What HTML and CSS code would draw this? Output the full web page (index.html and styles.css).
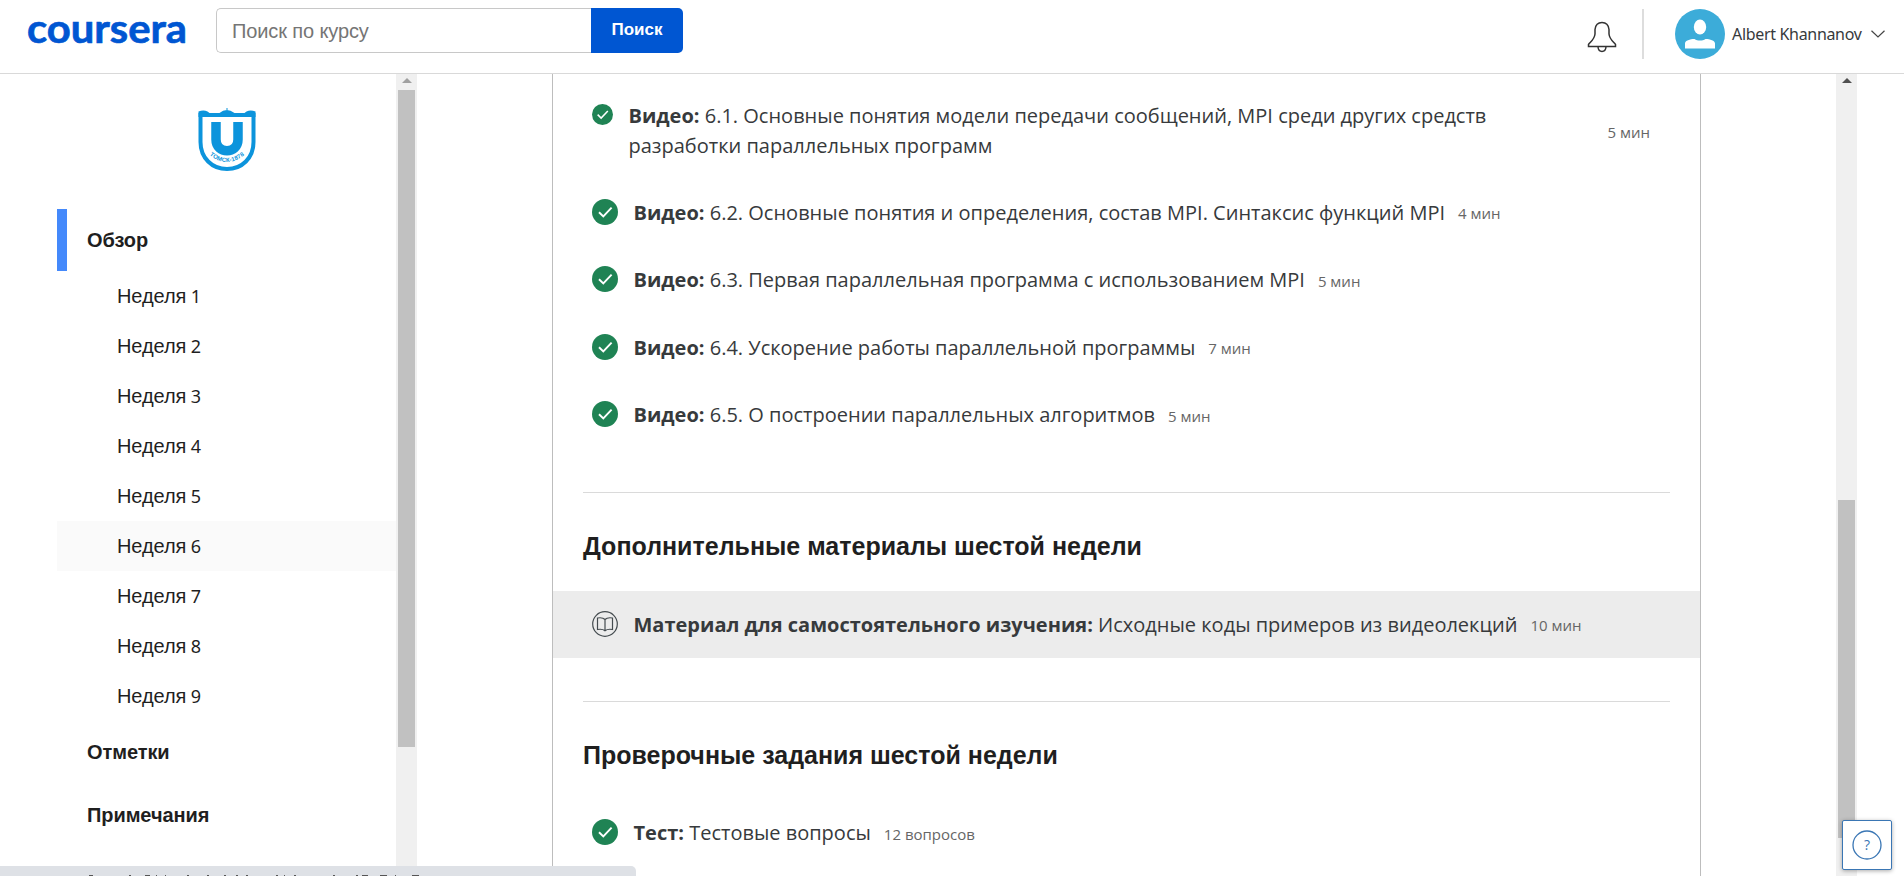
FILE: index.html
```
<!DOCTYPE html>
<html lang="ru">
<head>
<meta charset="utf-8">
<title>Coursera</title>
<link rel="stylesheet" href="styles.css">
</head>
<body>
<svg class="defs" width="0" height="0">
  <symbol id="done" viewBox="0 0 26 26">
    <circle cx="13" cy="13" r="13" fill="#1f8354"/>
    <path d="M7 13.2l4.3 4.2L19.6 8.6" fill="none" stroke="#fff" stroke-width="1.9"/>
  </symbol>
</svg>
<header class="header">
  <div class="logo"><svg width="164" height="60"><text x="1" y="43" textLength="160" lengthAdjust="spacingAndGlyphs">coursera</text></svg></div>
  <form class="search">
    <div class="search-field"><span>Поиск по курсу</span></div>
    <div class="search-button"><span>Поиск</span></div>
  </form>
  <div class="account">
    <svg class="bell" width="30" height="32" viewBox="0 0 30 32" fill="none" stroke="#333" stroke-width="1.5"><path d="M1.500 25.500v-2C4 20.500 7.500 18 8 13V8.500C8.500 4 11 1.500 15 1.500S21.500 4 22 8.500V13C22.500 18 26 20.500 28.500 23.500v2zM11 26c.3 3 2 4.500 4 4.500s3.700-1.500 4-4.500"/></svg>
    <div class="split"></div>
    <svg width="50" height="50" viewBox="0 0 50 50"><circle cx="25" cy="25" r="25" fill="#3cacd9"/><ellipse cx="25" cy="18" rx="6.200" ry="7.600" fill="#fff"/><path d="M10 39.500v-5c0-3 5-4.500 9.500-4.500 3 2 8 2 11 0 4.500 0 9.500 1.500 9.500 4.500v5z" fill="#fff"/></svg>
    <span class="name">Albert Khannanov</span>
    <svg width="14" height="8" viewBox="0 0 14 8" fill="none" stroke="#444" stroke-width="1.200"><path d="M.5.800 7 7 13.500.800"/></svg>
  </div>
</header>
<div class="page">
  <nav class="sidebar">
    <div class="crest">
      <svg width="60" height="66" viewBox="0 0 60 66">
        <path d="M3.500 8h53v27c0 16-11.500 27-26.500 27C15 62 3.500 51 3.500 35z" fill="none" stroke="#0c94dc" stroke-width="4"/>
        <path d="M1.500 4.500q5-2 9 0l2 1.500h10q7-6 15 0h10l2-1.500q4-2 9 0V10h-57zM29.500 1h1v4h-1z" fill="#0c94dc"/>
        <path d="M19 15v17.500c0 15 22 15 22 0V15" fill="none" stroke="#0c94dc" stroke-width="9.500"/>
        <path id="arc" d="M12 47.500q18 15 36 0" fill="none"/>
        <text class="crest-text"><textPath href="#arc" startOffset="50%" text-anchor="middle">ТОМСК-1878</textPath></text>
      </svg>
    </div>
    <div class="main-link active"><span>Обзор</span></div>
    <div class="week"><span>Неделя <i>1</i></span></div>
    <div class="week"><span>Неделя <i>2</i></span></div>
    <div class="week"><span>Неделя <i>3</i></span></div>
    <div class="week"><span>Неделя <i>4</i></span></div>
    <div class="week"><span>Неделя <i>5</i></span></div>
    <div class="week hover"><span>Неделя <i>6</i></span></div>
    <div class="week"><span>Неделя <i>7</i></span></div>
    <div class="week"><span>Неделя <i>8</i></span></div>
    <div class="week"><span>Неделя <i>9</i></span></div>
    <div class="main-link"><span>Отметки</span></div>
    <div class="main-link"><span>Примечания</span></div>
  </nav>
  <div class="bar bar-left"><div class="arrow"></div><div class="thumb"></div></div>
  <main class="content">
    <div class="item tall"><svg class="tick"><use href="#done"/></svg><p><b>Видео:</b> 6.1. Основные понятия модели передачи сообщений, MPI среди других средств<br>разработки параллельных программ</p><small>5 мин</small></div>
    <div class="item"><svg class="tick"><use href="#done"/></svg><p><b>Видео:</b> 6.2. Основные понятия и определения, состав MPI. Синтаксис функций MPI</p><small>4 мин</small></div>
    <div class="item"><svg class="tick"><use href="#done"/></svg><p><b>Видео:</b> 6.3. Первая параллельная программа с использованием MPI</p><small>5 мин</small></div>
    <div class="item"><svg class="tick"><use href="#done"/></svg><p><b>Видео:</b> 6.4. Ускорение работы параллельной программы</p><small>7 мин</small></div>
    <div class="item"><svg class="tick"><use href="#done"/></svg><p><b>Видео:</b> 6.5. О построении параллельных алгоритмов</p><small>5 мин</small></div>
    <hr>
    <h2>Дополнительные материалы шестой недели</h2>
    <div class="item shaded"><svg class="tick" viewBox="0 0 26 26" fill="none" stroke="#444b4f" stroke-width="1.200"><circle cx="13" cy="13" r="12.300"/><path d="M13 8.500C11.500 7 8.500 6.500 5.500 7v11.500c3-.5 6 0 7.500 1.200 1.500-1.200 4.500-1.700 7.500-1.200V7c-3-.5-6 0-7.500 1.500zv11.200"/></svg><p><b>Материал для самостоятельного изучения:</b> Исходные коды примеров из видеолекций</p><small>10 мин</small></div>
    <hr>
    <h2>Проверочные задания шестой недели</h2>
    <div class="item"><svg class="tick"><use href="#done"/></svg><p><b>Тест:</b> Тестовые вопросы</p><small>12 вопросов</small></div>
  </main>
  <div class="bar bar-right"><div class="arrow"></div><div class="thumb"></div></div>
</div>
<div class="status"><svg width="636" height="10"><path d="M89 9.500h4m36 0h2m14 0h5m6 0h1m8 0h1m21 0h2m18 0h2m15 0h2m10 0h2m8 0h2m28 0h2m6 0h1m9 0h2m37 0h2m21 0h2m4 0h6m12 0h7m8 0h1m16 0h7" stroke="#555" stroke-width="1"/></svg></div>
<div class="help"><svg width="30" height="30" viewBox="0 0 30 30"><circle cx="15" cy="15" r="14" fill="none" stroke="#3a76b4" stroke-width="1.300"/><text x="15" y="20" text-anchor="middle">?</text></svg></div>
</body>
</html>
```
FILE: styles.css
```
* { box-sizing: border-box; }
body { margin: 0; width: 1904px; height: 876px; overflow: hidden; background: #fff; font-family: "Open Sans", sans-serif; color: #373a3c; }
.defs { position: absolute; }
svg { flex: none; display: block; }
.header { height: 74px; border-bottom: 1px solid #d9d9d9; display: flex; align-items: flex-start; padding-left: 26px; }
.logo { width: 190px; }
.logo text { font: 700 41px Lato, sans-serif; fill: #0056d2; stroke: #0056d2; stroke-width: .7px; }
.search { display: flex; width: 467px; height: 45px; margin-top: 8px; }
.search-field { flex: 1; border: 1px solid #c8c8c8; border-right: 0; border-radius: 5px 0 0 5px; padding-left: 15px; font: 20px/44px "Liberation Sans", sans-serif; letter-spacing: -.12px; color: #757575; }
.search-button { width: 92px; background: #0056d2; border-radius: 0 5px 5px 0; color: #fff; text-align: center; font: bold 17px/43px "Liberation Sans", sans-serif; }
.account { flex: 1; display: flex; align-items: center; padding: 9px 19px 0 0; justify-content: flex-end; }
.bell { margin-right: 25px; margin-top: 5px; }
.split { width: 2px; height: 50px; background: #ddd; margin-right: 31px; }
.name { font: 16px/24px "Noto Sans", sans-serif; letter-spacing: -.32px; margin: 0 8px 0 7px; width: 131px; white-space: nowrap; }
.page { display: flex; height: 802px; }
.sidebar { width: 396px; padding-left: 57px; font: 20px/50px "Liberation Sans", sans-serif; letter-spacing: -.08px; color: #1f1f1f; }
.crest { height: 135px; padding: 33px 0 0 140px; }
.crest-text { font: bold 6px "Liberation Sans", sans-serif; letter-spacing: .2px; fill: #0c94dc; }
.main-link { height: 62px; line-height: 62px; padding-left: 30px; font-weight: bold; }
.main-link + .main-link { height: 63px; line-height: 64px; }
.active { border-left: 10px solid #4489fb; padding-left: 20px; }
.week { height: 50px; padding-left: 60px; }
.week i { font: 18px "Noto Sans", sans-serif; margin-left: -1px; }
.hover { background: #fafafa; }
.bar { width: 21px; background: #f0f0f0; padding: 4px 2px 0; }
.arrow { width: 0; height: 0; margin: 0 auto; border: 5px solid transparent; border-top: 0; border-bottom-color: #a0a0a0; }
.bar-left .thumb { height: 657px; margin-top: 7px; background: #c1c1c1; }
.bar-right .arrow { border-bottom-color: #505050; }
.bar-right .thumb { height: 338px; margin-top: 417px; background: #c1c1c1; }
.content { width: 1149px; margin: 0 135px; border: 1px solid #bdbdbd; border-width: 0 1px; padding-top: 15px; }
.item { height: 67.5px; padding: 0 38.5px; display: flex; align-items: center; }
.item p { margin: 0 0 0 16px; font-size: 20px; line-height: 30px; white-space: nowrap; }
.item small { margin-left: 13px; font-size: 15px; color: #666; padding-top: 1px; white-space: nowrap; }
.tick { width: 26px; height: 26px; margin-bottom: 2px; }
.tall { height: 90px; padding-right: 50px; padding-bottom: 6px; }
.tall .tick { width: 21px; height: 21px; align-self: flex-start; margin-top: 15px; }
.tall small { margin-left: auto; }
hr { border: 0; border-top: 1px solid #dadada; margin: 43px 30px 0; }
h2 { margin: 0 30px; height: 98px; font: bold 25px/107px "Liberation Sans", sans-serif; color: #1f1f1f; white-space: nowrap; }
.shaded { height: 67px; background: #ececec; }
.shaded + hr { margin-top: 42.5px; }
.status { position: absolute; left: 0; top: 866px; width: 636px; height: 10px; background: #dee1e6; border-radius: 0 5px 0 0; }
.help { position: absolute; left: 1842px; top: 820px; width: 50px; height: 50px; background: #fff; border: 1px solid #3a76b4; border-radius: 2px; box-shadow: 0 1px 4px #0005; display: flex; align-items: center; justify-content: center; }
.help text { font: 14px "Open Sans", sans-serif; fill: #3a76b4; }
```
